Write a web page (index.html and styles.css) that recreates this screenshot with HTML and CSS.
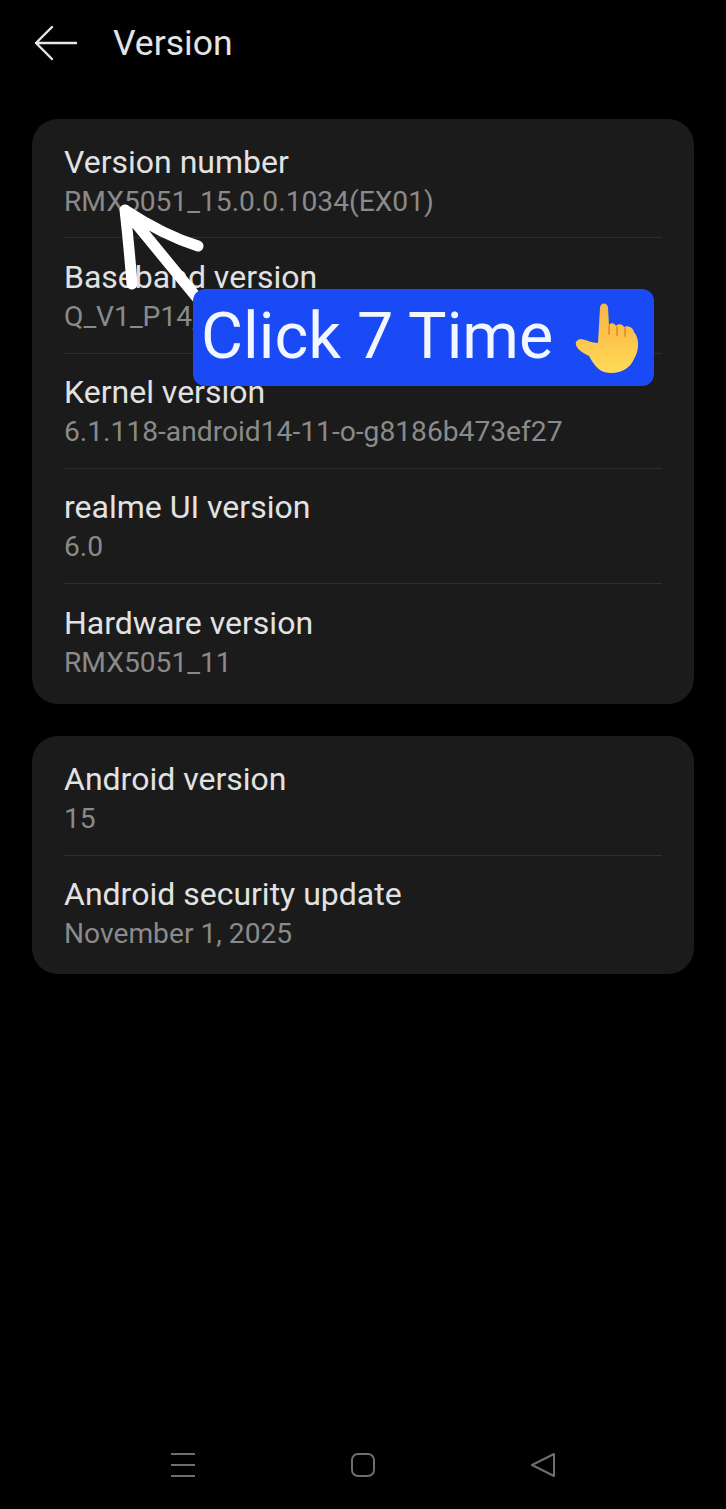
FILE: index.html
```html
<!DOCTYPE html>
<html lang="en">
<head>
    <meta charset="UTF-8">
    <meta name="viewport" content="width=device-width,user-scalable=no">
    <title>Version</title>
    <link rel="stylesheet" href="styles.css">
</head>
<body>

<header class="top">
    <svg class="back" width="44" height="36" viewBox="0 0 44 36" fill="none" stroke="#e6e6e6" stroke-width="2.4" stroke-linecap="round" stroke-linejoin="round">
        <path d="M42 18H2M18 2L2 18L18 34"/>
    </svg>
    <span class="top-title">Version</span>
</header>

<section class="card card-first">
    <div class="row">
        <p class="name">Version number</p>
        <p class="val">RMX5051_15.0.0.1034(EX01)</p>
    </div>
    <div class="row">
        <p class="name">Baseband version</p>
        <p class="val val-cut">Q_V1_P14,</p>
    </div>
    <div class="row">
        <p class="name">Kernel version</p>
        <p class="val">6.1.118-android14-11-o-g8186b473ef27</p>
    </div>
    <div class="row">
        <p class="name">realme UI version</p>
        <p class="val">6.0</p>
    </div>
    <div class="row">
        <p class="name">Hardware version</p>
        <p class="val">RMX5051_11</p>
    </div>
</section>

<section class="card card-second">
    <div class="row">
        <p class="name">Android version</p>
        <p class="val">15</p>
    </div>
    <div class="row">
        <p class="name">Android security update</p>
        <p class="val">November 1, 2025</p>
    </div>
</section>

<footer class="nav">
    <svg width="26" height="26" viewBox="0 0 26 26" fill="none" stroke="#6e6e6e" stroke-width="2">
        <path d="M1 2H25M1 13H25M1 24H25"/>
    </svg>
    <svg width="26" height="26" viewBox="0 0 26 26" fill="none" stroke="#6e6e6e" stroke-width="2">
        <rect x="2" y="2" width="22" height="22" rx="6"/>
    </svg>
    <svg width="26" height="26" viewBox="0 0 26 26" fill="none" stroke="#6e6e6e" stroke-width="2" stroke-linejoin="round">
        <path d="M24 2V24L2 13Z"/>
    </svg>
</footer>

<!-- annotation drawn over the screen -->
<svg class="arrow" width="100" height="110" viewBox="0 0 100 110" fill="none" stroke="#fff" stroke-width="11" stroke-linecap="round" stroke-linejoin="round">
    <path d="M14 81Q11 42 7 7Q45 32 80 43M7 7L80 96"/>
</svg>
<div class="tip">
    <span class="tip-text">Click 7 Time</span>
    <svg class="hand" width="68" height="74" viewBox="0 0 68 74">
        <defs>
            <linearGradient id="skin" x1="0" y1="0" x2="0" y2="1">
                <stop offset="0" stop-color="#f7b948"/>
                <stop offset="0.45" stop-color="#fcc24c"/>
                <stop offset="1" stop-color="#ffdb57"/>
            </linearGradient>
        </defs>
        <path fill="url(#skin)" d="M26 7C26 1 34 1 34 7L35 24C37 21 41 22 42 25C44 22 49 23 50 26C53 24 59 26 60 31C66 38 65 50 60 58C55 70 42 74 30 71C22 68 18 60 15 55C10 52 5 50 3 46C0 42 3 38 7 38C13 39 18 42 24 42Z"/>
        <path fill="none" stroke="#e8952a" stroke-width="2" stroke-linecap="round" d="M35 25V33M43 26V34M51 27V35"/>
    </svg>
</div>

</body>
</html>
```

FILE: styles.css
```css
*{
    margin:0;
    padding:0;
    box-sizing:border-box;
}

body {
    position:relative;
    display:flex;
    flex-direction:column;
    width:726px;
    height:1509px;
    overflow:hidden;
    background:#000;
    font-family:Roboto, sans-serif;
}

.top {
    display:flex;
    align-items:center;
    gap:35px;
    height:86px;
    padding-left:34px;
    margin-bottom:33px;
}
.top-title {
    font-size:35.5px;
    color:#e4e4e4;
}

.card {
    margin:0 32px;
    padding:4px 32px 5px;
    background:#1b1b1b;
    border-radius:26px;
}
.card-first {
    margin-bottom:32px;
}
.card-second {
    padding-bottom:3.5px;
}
.row {
    height:115.25px;
    padding-top:18.5px;
    border-bottom:1px solid #2e2e2e;
}
.row:last-child {
    border-bottom:0;
}
.name {
    font-size:32px;
    line-height:40px;
    color:#e2e2e2;
}
.val {
    font-size:28.2px;
    line-height:40px;
    color:#8a8a8a;
}

.nav {
    display:flex;
    justify-content:space-between;
    width:386px;
    margin:auto 0 0 170px;
    padding-bottom:31px;
}

.arrow {
    position:absolute;
    left:118px;
    top:203px;
}
.tip {
    position:absolute;
    left:193px;
    top:289px;
    display:flex;
    align-items:center;
    gap:21px;
    width:461px;
    height:97px;
    padding-left:8px;
    background:#1a4af5;
    border-radius:12px;
    color:#f2f6ff;
    font-size:64.6px;
    white-space:nowrap;
}
.tip-text {
    margin-bottom:3px;
}
```
